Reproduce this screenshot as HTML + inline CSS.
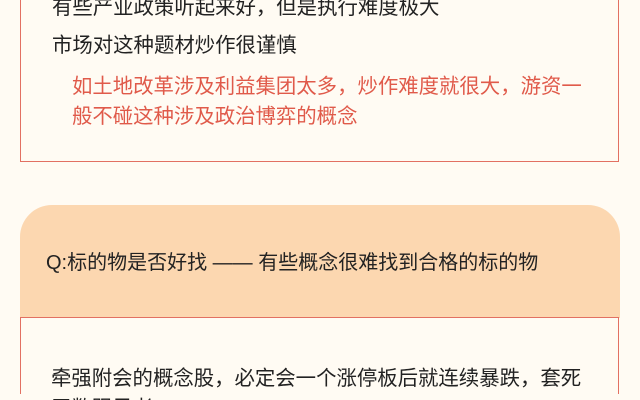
<!DOCTYPE html>
<html style="width:640px;height:400px;overflow:hidden"><head><meta charset="utf-8"><style>
html,body{margin:0;padding:0}
body{width:640px;height:400px;overflow:hidden;background:#fffbf3;position:relative;font-family:"Liberation Sans","Noto Sans CJK SC",sans-serif;}
.box1{position:absolute;left:20px;top:-20px;width:597px;height:181px;border:1.5px solid #e27062;border-top:none;}
.t{position:absolute;font-size:20.4px;color:#222;white-space:nowrap;}
.r{color:#e05a4a;}
.hdr{position:absolute;left:20px;top:205px;width:600px;height:113px;background:#fcd7b0;border-radius:32px 32px 0 0;}
.box2{position:absolute;left:20px;top:317px;width:597px;height:76px;border:1.5px solid #e27062;border-bottom:none;}
</style></head><body>
<div class="t" style="left:52px;top:-10px">有些产业政策听起来好，但是执行难度极大</div>
<div class="box1"></div>
<div class="t" style="left:52px;top:28px">市场对这种题材炒作很谨慎</div>
<div class="t r" style="left:72px;top:69px">如土地改革涉及利益集团太多，炒作难度就很大，游资一</div>
<div class="t r" style="left:72px;top:99px">般不碰这种涉及政治博弈的概念</div>
<div class="hdr"></div>
<div class="t" style="left:46px;top:246px;font-size:20px">Q:标的物是否好找 —— 有些概念很难找到合格的标的物</div>
<div class="box2"></div>
<div class="t" style="left:51px;top:361px">牵强附会的概念股，必定会一个涨停板后就连续暴跌，套死</div>
<div class="t" style="left:51px;top:391px">无数跟风者</div>
</body></html>
